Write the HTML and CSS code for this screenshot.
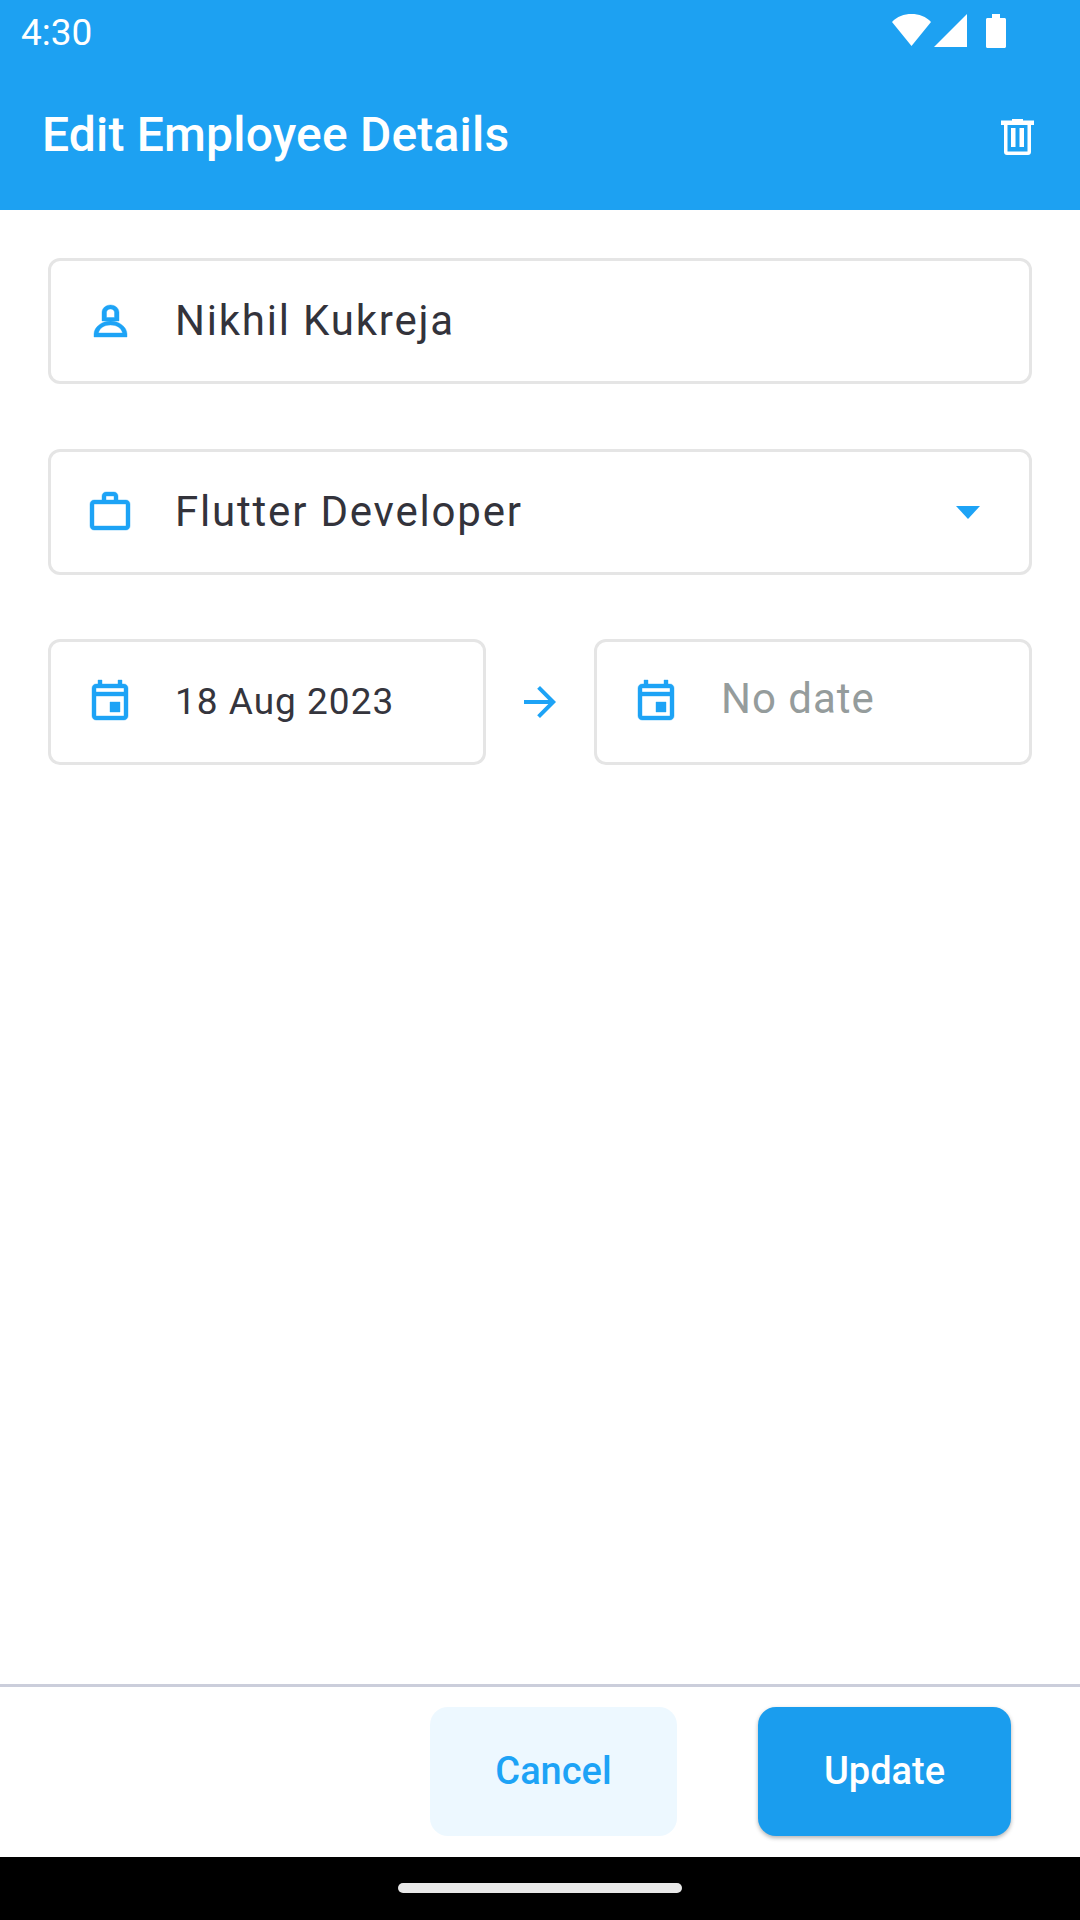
FILE: index.html
```html
<!DOCTYPE html>
<html lang="en">
<head>
<meta charset="utf-8">
<title>Edit Employee Details</title>
<link rel="stylesheet" href="styles.css">
</head>
<body>
<div class="screen">
  <header class="top">
    <div class="status">
      <span class="time">4:30</span>
      <div class="status-icons">
        <svg class="i-wifi" viewBox="0 0 39 32"><path d="M0 8C5 2.500 12 0 19.500 0S34 2.500 39 8L19.500 32z"/></svg>
        <svg class="i-signal" viewBox="0 0 33 33"><path d="M33 0v33H0z"/></svg>
        <svg class="i-battery" viewBox="0 0 20 34"><path d="M6 0h8v4h4.500c.8 0 1.500.7 1.500 1.500v27c0 .8-.7 1.500-1.500 1.500h-17C.7 34 0 33.300 0 32.500v-27C0 4.700.7 4 1.500 4H6z"/></svg>
      </div>
    </div>
    <div class="appbar">
      <h1 class="title">Edit Employee Details</h1>
      <svg class="i-trash" viewBox="0 0 33 36"><path fill-rule="evenodd" d="M11 0h11v1.500h11V6h-3v27c0 1.700-1.300 3-3 3H6c-1.700 0-3-1.300-3-3V6H0V1.500h11zM6.500 6v26.500h20V6zM10 9h4.500v19H10zM18.500 9H23v19h-4.500z"/></svg>
    </div>
  </header>
  <main class="form">
    <div class="field">
      <svg class="icon icon-person" viewBox="0 0 48 48"><path fill-rule="evenodd" d="M16 24V15.500C16 11 20 8 24.500 8S33 11 33 15.500V24zM20.500 20.500V15.500C20.500 13.300 22.300 12 24.500 12S28.500 13.300 28.500 15.500V20.500zM8 40V37C8 30 16 24 24.500 24S41 30 41 37V40zM12.500 36C13.500 31 18 28 24.500 28S35.500 31 36.500 36z"/></svg>
      <span class="value">Nikhil Kukreja</span>
    </div>
    <div class="field">
      <svg class="icon" viewBox="0 0 24 24"><path d="M14 6V4h-4v2h4zM4 8v11h16V8H4zm16-2c1.110 0 2 .89 2 2v11c0 1.110-.89 2-2 2H4c-1.110 0-2-.89-2-2l.01-11c0-1.110.88-2 1.990-2h4V4c0-1.110.89-2 2-2h4c1.110 0 2 .89 2 2v2h4z"/></svg>
      <span class="value">Flutter Developer</span>
      <svg class="caret" viewBox="0 0 24 13"><path d="M0 0h24L12 13z"/></svg>
    </div>
    <div class="dates">
      <div class="field date">
        <svg class="icon" viewBox="0 0 24 24"><path d="M19 4h-1V2h-2v2H8V2H6v2H5c-1.110 0-1.990.9-1.990 2L3 20c0 1.100.89 2 2 2h14c1.100 0 2-.9 2-2V6c0-1.100-.9-2-2-2zm0 16H5V10h14v10zm0-12H5V6h14v2zm-7 5h5v5h-5z"/></svg>
        <span class="date-value">18 Aug 2023</span>
      </div>
      <svg class="arrow" viewBox="0 0 24 24"><path d="M12 4l-1.410 1.410L16.170 11H4v2h12.170l-5.580 5.590L12 20l8-8z"/></svg>
      <div class="field date">
        <svg class="icon" viewBox="0 0 24 24"><path d="M19 4h-1V2h-2v2H8V2H6v2H5c-1.110 0-1.990.9-1.990 2L3 20c0 1.100.89 2 2 2h14c1.100 0 2-.9 2-2V6c0-1.100-.9-2-2-2zm0 16H5V10h14v10zm0-12H5V6h14v2zm-7 5h5v5h-5z"/></svg>
        <span class="placeholder">No date</span>
      </div>
    </div>
  </main>
  <footer class="actions">
    <button class="btn btn-cancel">Cancel</button>
    <button class="btn btn-update">Update</button>
  </footer>
  <div class="navbar"><div class="pill"></div></div>
</div>
</body>
</html>
```
FILE: styles.css
```css
* { box-sizing: border-box; }
html, body { margin: 0; padding: 0; }
body { font-family: Roboto, "Noto Sans", sans-serif; background: #fff; }
.screen { width: 1080px; height: 1920px; display: flex; flex-direction: column; overflow: hidden; }

.top { height: 210px; background: #1DA1F2; color: #fff; flex: none; }
.status { height: 66px; display: flex; align-items: flex-start; justify-content: space-between; padding: 0 74px 0 21px; }
.time { font-size: 37px; line-height: 66px; }
.status-icons { display: flex; align-items: flex-start; padding-top: 14px; }
.status-icons svg { fill: #fff; display: block; }
.i-wifi { width: 39px; height: 32px; }
.i-signal { width: 33px; height: 33px; margin-left: 3px; }
.i-battery { width: 20px; height: 34px; margin-left: 19px; }

.appbar { height: 144px; display: flex; align-items: center; justify-content: space-between; padding: 0 46px 6px 42px; }
.title { margin: 0; font-size: 48px; font-weight: 500; line-height: 56px; letter-spacing: 0.18px; }
.i-trash { width: 33px; height: 36px; fill: #fff; display: block; margin-top: 4px; }

.form { flex: 1; padding: 48px 48px 0; display: flex; flex-direction: column; gap: 65px; }
.field { height: 126px; border: 3px solid #E5E5E5; border-radius: 12px; display: flex; align-items: center; padding: 0 35px; background: #fff; flex: none; }
.icon { width: 48px; height: 48px; fill: #1DA3F6; stroke: #1DA3F6; stroke-width: 0.2; flex: none; display: block; }
.icon-person { stroke-width: 0.4; }
.value { margin-left: 41px; font-size: 42px; letter-spacing: 1.8px; color: #33333B; line-height: 48px; }
.caret { width: 24px; height: 13px; fill: #1DA3F6; margin-left: auto; margin-right: 14px; }

.dates { display: flex; align-items: center; justify-content: space-between; margin-top: -1px; }
.date { width: 438px; }
.date .icon { margin-bottom: 4px; }
.date-value { margin-left: 41px; font-size: 37px; letter-spacing: 1px; color: #35353D; line-height: 48px; }
.placeholder { margin-left: 41px; font-size: 42px; letter-spacing: 1px; color: #959C9C; line-height: 48px; position: relative; top: -3px; }
.arrow { width: 48px; height: 48px; fill: #1DA3F6; flex: none; }

.actions { flex: none; height: 173px; border-top: 3px solid #CBCEDB; display: flex; justify-content: flex-end; gap: 81px; padding: 20px 69px 21px 0; }
.btn { border: 0; border-radius: 18px; font-family: inherit; font-size: 38px; font-weight: 500; height: 129px; padding: 0 0 2px; }
.btn-cancel { width: 247px; background: #EDF8FF; color: #1DA3F6; }
.btn-update { width: 253px; background: #1A9DEE; color: #fff; box-shadow: 0 2px 4px rgba(0,0,0,.3); }

.navbar { flex: none; height: 63px; background: #000; display: flex; justify-content: center; padding-top: 26px; }
.pill { width: 284px; height: 10px; border-radius: 5px; background: #E8E8E8; }
```
